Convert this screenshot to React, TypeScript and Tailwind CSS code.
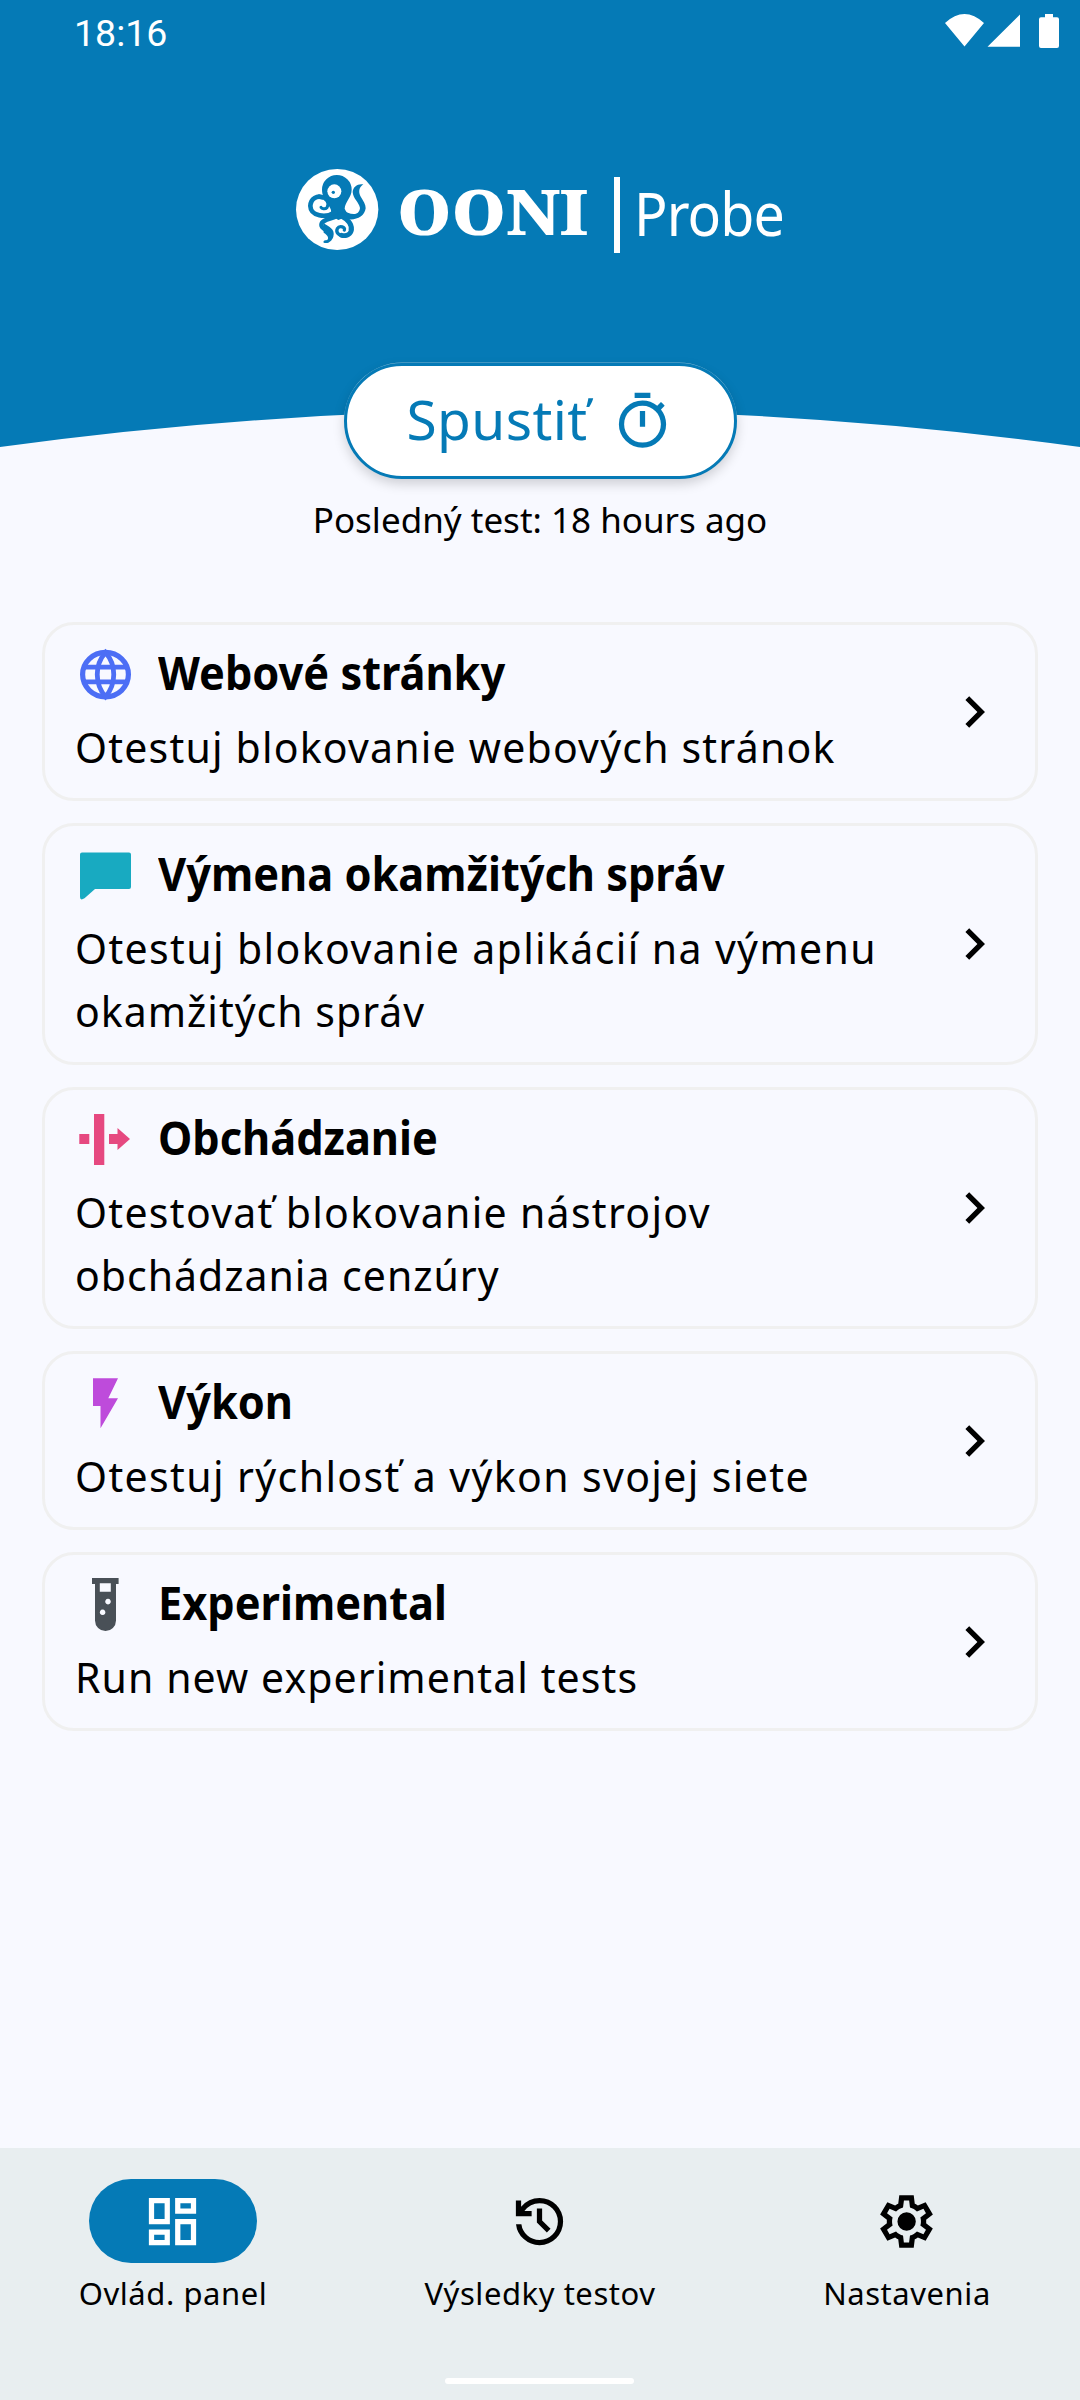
import type { ReactNode } from "react";

const TestCard = ({ icon, title, text }: { icon: ReactNode; title: string; text: ReactNode }) => (
  <div className="flex items-center rounded-[32px] border-[3px] border-[#f0f0f0] pl-[29px] pr-[50px] pt-[18px] pb-[19.4px]">
    <div className="grow">
      <div className="flex h-[63px] gap-[21px]">
        <svg className="size-[63px] shrink-0" viewBox="0 0 63 63">{icon}</svg>
        <h2 className="origin-left scale-x-[0.942] text-[46px] leading-[59px] font-bold whitespace-nowrap">{title}</h2>
      </div>
      <p className="mt-[9.6px] ml-px text-[41px] leading-[63px] whitespace-nowrap">{text}</p>
    </div>
    <svg className="mt-[2px] h-[32px] w-[20px] shrink-0" viewBox="0 0 20 32">
      <path d="M4.2 0.2 20 16 4.2 31.8 0.4 28 12.4 16 0.4 4z" fill="#000" />
    </svg>
  </div>
);

const globe = (
  <g fill="none" stroke="#4c6ef5" strokeWidth="5.2">
    <ellipse cx="31.5" cy="31.6" rx="22.9" ry="22.2" />
    <path d="M31.5 9.4C20.5 22 20.5 41 31.5 53.8C42.5 41 42.5 22 31.5 9.4z" strokeWidth="4.8" />
    <path d="M11 24.2H52M11 38.9H52" strokeWidth="4.8" />
  </g>
);
const chat = <path d="M8 8.5h47q2 0 2 2v32.500q0 2-2 2H21L10.500 54.300Q6 57 6 53V10.500q0-2 2-2z" fill="#18aac1" />;
const bypass = <path d="M5.300 26h10v10h-10zM20 6h10.300v51H20zM35 26h8.500v-6L56 31 43.500 42v-6H35z" fill="#e64980" />;
const bolt = <path d="M19 6.300h25l-9.700 20H44L26.500 56.300V34H19z" fill="#be4bdb" />;
const tube = (
  <path
    fillRule="evenodd"
    d="M18 5h26.600v6H42v36.500a10.500 10.500 0 0 1-21 0V11h-3zM25.800 10.300v8.400h11v-8.400zM34 25.800a2.800 2.800 0 1 0 .01 0zM28.600 36.500a2.800 2.800 0 1 0 .01 0z"
    fill="#495057"
  />
);

const NavItem = ({ active, label, d }: { active?: boolean; label: string; d: string }) => (
  <div className="flex w-[346px] flex-col items-center">
    <div className={active ? "flex h-[84px] w-[168px] items-center justify-center rounded-full bg-[#057ab6] text-white" : "flex h-[84px] w-[168px] items-center justify-center text-black"}>
      <svg className="size-[63px]" viewBox="0 0 24 24" fill="currentColor"><path d={d} /></svg>
    </div>
    <span className="mt-[9px] ml-px text-[31px] leading-[42px] tracking-[0.55px] whitespace-nowrap">{label}</span>
  </div>
);

const Octopus = () => (
  <svg className="size-[100px]" viewBox="0 0 300 300">
    <ellipse cx="156.500" cy="148.500" rx="123.500" ry="121.500" fill="#fff" />
    <g fill="#057ab6">
      <path d="M111 89a44.500 44 0 0 1 89 0C200 112 180 125 179 146L184 156 176 174 160 180 140 168 138 158C143 140 111 122 111 89z" />
      <path d="M203 96C204 80 218 70 235 73C222 82 220 95 226 108C236 124 242 134 242 145C238 176 200 186 170 172L172 146C190 164 222 172 225 144C222 126 204 116 203 96z" />
      <path d="M115 188C130 200 152 206 145 230C140 244 130 252 116 248C114 243 118 240 123 241C134 238 130 226 116 218z" />
    </g>
    <g fill="none" stroke="#057ab6" strokeLinecap="round">
      <path d="M152 156C122 176 77 168 76 138C77 114 98 106 112 112" strokeWidth="14" />
      <path d="M102 108C124 114 135 130 126 143C120 149 110 146 108 142" strokeWidth="9" />
      <path d="M156 168C140 178 109 178 109 195C109 204 120 208 128 214" strokeWidth="13" />
      <path d="M166 166C192 180 204 194 198 214C194 226 180 228 170 226" strokeWidth="15" />
      <path d="M180 228C160 228 152 216 157 206C164 194 182 202 178 210" strokeWidth="10" />
    </g>
    <circle cx="148" cy="94" r="21" fill="#fff" />
    <circle cx="145" cy="97" r="5" fill="#057ab6" />
  </svg>
);

const Logo = () => (
  <div className="flex h-[100px] items-start text-white">
    <Octopus />
    <span className="ml-[12px] mt-[9px] w-[216.500px] origin-left scale-x-[1.065] font-['Noto_Serif',serif] text-[62.5px] leading-[84px] font-black">OONI</span>
    <div className="mt-[17px] h-[76px] w-[6.5px] bg-white" />
    <span className="ml-[14px] mt-[10.500px] origin-left scale-x-[0.918] text-[60.5px] leading-[84px] tracking-[-1px]">Probe</span>
  </div>
);

export default function App() {
  return (
    <div className="relative flex h-[2400px] w-[1080px] flex-col bg-[#f8f9ff] font-['Noto_Sans',sans-serif] text-black">
      <header className="relative flex h-[447px] flex-col">
        <svg className="absolute inset-0 h-[447px] w-[1080px]" viewBox="0 0 1080 447">
          <path d="M0 0H1080V447Q540 373 0 447z" fill="#057ab6" />
        </svg>
        <div className="relative flex h-[66px] items-start justify-between pl-[74px] pr-[21px] text-white">
          <span className="pt-[11px] font-['Roboto',sans-serif] text-[37.5px] leading-[44px]">18:16</span>
          <svg className="mt-[13px] h-[36px] w-[115px]" viewBox="944 13 115 36" fill="#fff">
            <path d="M945 23Q964.500 5 984 23L964.500 46.500zM1020 14.500V46.700H987.500zM1045 14h8v3.300h4q2 0 2 2V46q0 2-2 2h-16q-2 0-2-2V19.300q0-2 2-2h4z" />
          </svg>
        </div>
        <div className="relative mt-[94px] ml-[285px]">
          <Logo />
        </div>
      </header>
      <div className="relative -mt-[84px] flex flex-col items-center">
        <button className="flex h-[116px] w-[393px] items-center rounded-full border-[3px] border-[#057ab6] bg-white pl-[58px] text-[#057ab6] shadow-[0_5px_12px_rgba(0,0,0,0.17),0_-0.5px_0_rgba(255,255,255,0.5)]">
          <span className="-mt-[4px] w-[185px] text-[55px] leading-[84px] tracking-[0.4px]">Spustiť</span>
          <svg className="ml-[21px] size-[63px]" viewBox="0 0 24 24" fill="currentColor">
            <path d="M15 1H9v2h6V1zm-4 13h2V8h-2v6zm8.030-6.610 1.420-1.420c-.43-.51-.9-.99-1.410-1.410l-1.420 1.420A8.962 8.962 0 0 0 12 4a9 9 0 1 0 9 9c0-2.120-.74-4.070-1.970-5.610zM12 20c-3.870 0-7-3.130-7-7s3.130-7 7-7 7 3.130 7 7-3.130 7-7 7z" />
          </svg>
        </button>
        <p className="mt-[15.500px] text-[35px] leading-[50px]">Posledný test: 18 hours ago</p>
      </div>
      <main className="mx-[42px] mt-[77.500px] flex flex-col gap-[22px]">
        <TestCard icon={globe} title="Webové stránky" text={<span className="tracking-[1.2px]">Otestuj blokovanie webových stránok</span>} />
        <TestCard icon={chat} title="Výmena okamžitých správ" text={<><span className="tracking-[1.380px]">Otestuj blokovanie aplikácií na výmenu</span><br /><span className="tracking-[1px]">okamžitých správ</span></>} />
        <TestCard icon={bypass} title="Obchádzanie" text={<><span className="tracking-[1.3px]">Otestovať blokovanie nástrojov</span><br /><span className="tracking-[1px]">obchádzania cenzúry</span></>} />
        <TestCard icon={bolt} title="Výkon" text={<span className="tracking-[1.380px]">Otestuj rýchlosť a výkon svojej siete</span>} />
        <TestCard icon={tube} title="Experimental" text={<span className="tracking-[1.080px]">Run new experimental tests</span>} />
      </main>
      <nav className="mt-auto flex h-[252px] w-full flex-col items-center bg-[#e8eef0] pr-[1px]">
        <div className="flex gap-[21px] pt-[31px]">
          <NavItem active label="Ovlád. panel" d="M19 5v2h-4V5h4M9 5v6H5V5h4m10 8v6h-4v-6h4M9 17v2H5v-2h4M21 3h-8v6h8V3zM11 3H3v10h8V3zm10 8h-8v10h8V11zm-10 4H3v6h8v-6z" />
          <NavItem label="Výsledky testov" d="M12 21q-3.450 0-6.012-2.287T3.050 13H5.100q.35 2.600 2.313 4.300T12 19q2.925 0 4.963-2.037T19 12t-2.037-4.962T12 5q-1.725 0-3.225.8T6.250 8H9v2H3V4h2v2.350q1.275-1.600 3.113-2.475T12 3q1.875 0 3.513.713t2.850 1.924t1.925 2.850T21 12t-.712 3.513t-1.925 2.850t-2.850 1.925T12 21m2.800-4.800L11 12.400V7h2v4.600l3.200 3.200z" />
          <NavItem label="Nastavenia" d="m9.250 22l-.4-3.200q-.325-.125-.612-.3t-.563-.375L4.700 19.375l-2.750-4.750l2.575-1.950Q4.500 12.500 4.500 12.338v-.675q0-.163.025-.338L1.950 9.375l2.750-4.750l2.975 1.250q.275-.2.575-.375t.6-.3l.4-3.200h5.500l.4 3.200q.325.125.613.3t.562.375l2.975-1.250l2.750 4.750l-2.575 1.950q.025.175.025.338v.674q0 .163-.05.338l2.575 1.950l-2.750 4.750l-2.950-1.250q-.275.2-.575.375t-.6.3l-.4 3.200zM11 20h1.975l.35-2.650q.775-.2 1.438-.587t1.212-.938l2.475 1.025l.975-1.700l-2.150-1.625q.125-.35.175-.737T17.500 12t-.05-.787t-.175-.738l2.150-1.625l-.975-1.700l-2.475 1.050q-.55-.575-1.212-.962t-1.438-.588L13 4h-1.975l-.35 2.650q-.775.2-1.437.588t-1.213.937L5.550 7.150l-.975 1.700l2.150 1.600q-.125.375-.175.75t-.05.8q0 .4.05.775t.175.75l-2.150 1.625l.975 1.700l2.475-1.050q.55.575 1.213.963t1.437.587zm1.050-4.500q1.450 0 2.475-1.025T15.550 12t-1.025-2.475T12.050 8.500q-1.475 0-2.488 1.025T8.550 12t1.013 2.475T12.050 15.500" />
        </div>
        <div className="mt-auto mb-[16px] h-[6px] w-[189px] rounded-full bg-white" />
      </nav>
    </div>
  );
}
